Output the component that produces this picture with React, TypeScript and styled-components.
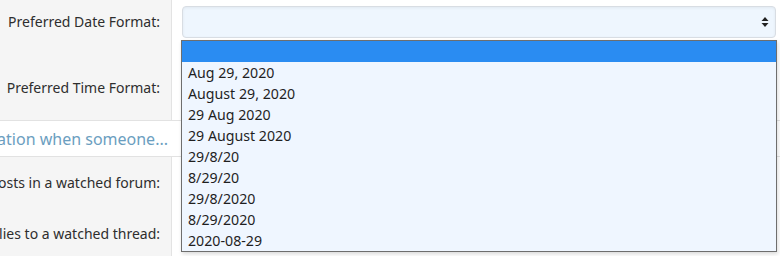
import React from 'react';
import styled, {createGlobalStyle} from 'styled-components';

const GlobalStyle = createGlobalStyle`
  html, body { margin: 0; padding: 0; background: #fff; overflow: hidden; }
  body { font-family: "Noto Sans", "Open Sans", sans-serif; color: #222; }
`;

const Page = styled.div`
  position: relative;
  width: 780px;
  height: 256px;
  overflow: hidden;
`;

const FormRow = styled.div<{$pad: number; $height: number}>`
  display: grid;
  grid-template-columns: 172px 1fr;
  height: ${p => p.$height}px;
  & > * { padding-top: ${p => p.$pad}px; }
`;

const Label = styled.div`
  box-sizing: border-box;
  background: #f5f5f5;
  border-right: 1px solid #e3e3e3;
  display: flex;
  justify-content: flex-end;
  padding-right: 11px;
  font-size: 14px;
  line-height: 32px;
  white-space: nowrap;
  color: #2e2e2e;
`;

const Control = styled.div`
  padding-left: 10px;
  padding-right: 4px;
`;

const Select = styled.div`
  box-sizing: border-box;
  height: 32px;
  border: 1px solid #d8dde3;
  border-radius: 4px;
  background: #eef6fe;
  box-shadow: inset 0 1px 3px rgba(0, 0, 0, 0.06);
  display: flex;
  align-items: center;
  justify-content: flex-end;
  padding-right: 6px;
`;

const SectionHeader = styled.div`
  box-sizing: border-box;
  height: 37px;
  border-top: 1px solid #e2e2e2;
  border-bottom: 1px solid #e2e2e2;
  background: #fff;
  display: flex;
`;

const HeaderText = styled.div`
  width: 168px;
  display: flex;
  justify-content: flex-end;
  align-items: center;
  white-space: nowrap;
  font-size: 16px;
  color: #6b9ec0;
`;

const Dropdown = styled.ul`
  position: absolute;
  left: 181px;
  top: 40px;
  width: 596px;
  margin: 0;
  padding: 0;
  list-style: none;
  box-sizing: border-box;
  border: 1px solid #6e6e6e;
  background: #eff6ff;
  box-shadow: 1px 2px 4px rgba(0, 0, 0, 0.15);
`;

const Option = styled.li<{$active?: boolean}>`
  height: 21px;
  line-height: 21px;
  padding-left: 6px;
  font-size: 14.2px;
  color: ${p => (p.$active ? '#fff' : '#1f1f1f')};
  background: ${p => (p.$active ? '#2a8cf2' : 'transparent')};
  white-space: nowrap;
`;

const SpinArrows = () => (
  <svg width="8" height="12" viewBox="0 0 8 12">
    <path d="M4 1 L7.5 5 L0.5 5 Z" fill="#222" />
    <path d="M4 11 L7.5 7 L0.5 7 Z" fill="#222" />
  </svg>
);

const formats = [
  '',
  'Aug 29, 2020',
  'August 29, 2020',
  '29 Aug 2020',
  '29 August 2020',
  '29/8/20',
  '8/29/20',
  '29/8/2020',
  '8/29/2020',
  '2020-08-29',
];

const App = () => {
  return (
    <Page>
      <GlobalStyle />
      <FormRow $pad={6} $height={50}>
        <Label>Preferred Date Format:</Label>
        <Control>
          <Select><SpinArrows /></Select>
        </Control>
      </FormRow>
      <FormRow $pad={22} $height={70}>
        <Label>Preferred Time Format:</Label>
        <Control>
          <Select><SpinArrows /></Select>
        </Control>
      </FormRow>
      <SectionHeader>
        <HeaderText>Receive a notification when someone...</HeaderText>
      </SectionHeader>
      <FormRow $pad={10} $height={51}>
        <Label>Creates new posts in a watched forum:</Label>
        <Control />
      </FormRow>
      <FormRow $pad={10} $height={48}>
        <Label>Replies to a watched thread:</Label>
        <Control />
      </FormRow>
      <Dropdown>
        {formats.map((f, i) => (
          <Option key={i} $active={i === 0}>{f || '\u00a0'}</Option>
        ))}
      </Dropdown>
    </Page>
  );
};

export default App;
